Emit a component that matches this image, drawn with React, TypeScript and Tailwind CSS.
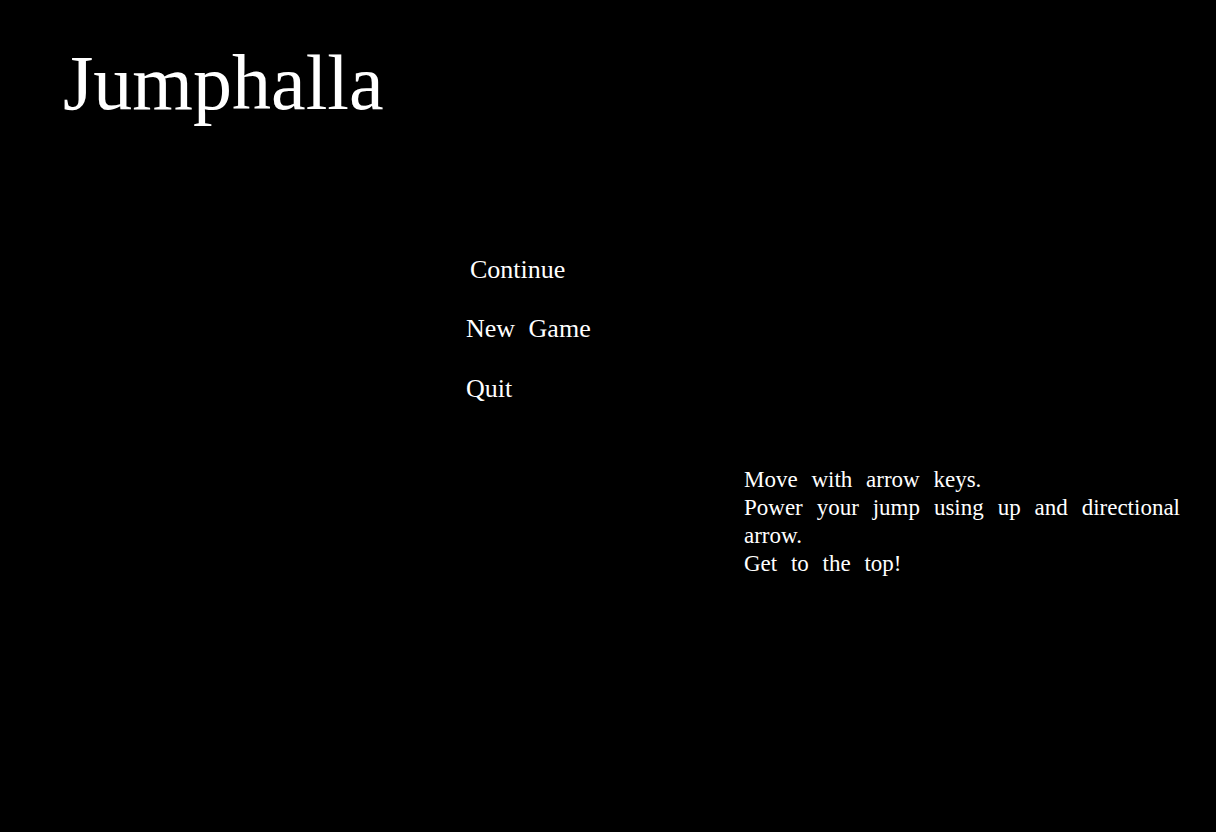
import React from 'react';

const App = () => {
  const menu = [
    { label: "Continue", indent: "pl-1" },
    { label: "New Game", indent: "" },
    { label: "Quit", indent: "" }
  ];

  return (
    <div className="w-full h-screen bg-black text-white overflow-hidden font-['Liberation_Serif','Times_New_Roman',serif]">
      {/* Title */}
      <h1 className="pt-[44px] pl-[63px] text-[78px] leading-none font-normal">
        Jumphalla
      </h1>

      {/* Menu */}
      <ul className="mt-[117.5px] ml-[466px] w-[200px] text-[26px] leading-[59.5px] [word-spacing:7px]">
        {menu.map((item, index) => (
          <li key={index} className={`${item.indent} cursor-pointer`}>
            {item.label}
          </li>
        ))}
      </ul>

      {/* Instructions */}
      <p className="mt-[48px] ml-[744px] w-[436px] text-[23px] leading-[28px] text-justify [word-spacing:8px]">
        Move with arrow keys.
        <br />
        Power your jump using up and directional arrow.
        <br />
        Get to the top!
      </p>
    </div>
  );
};

export default App;
